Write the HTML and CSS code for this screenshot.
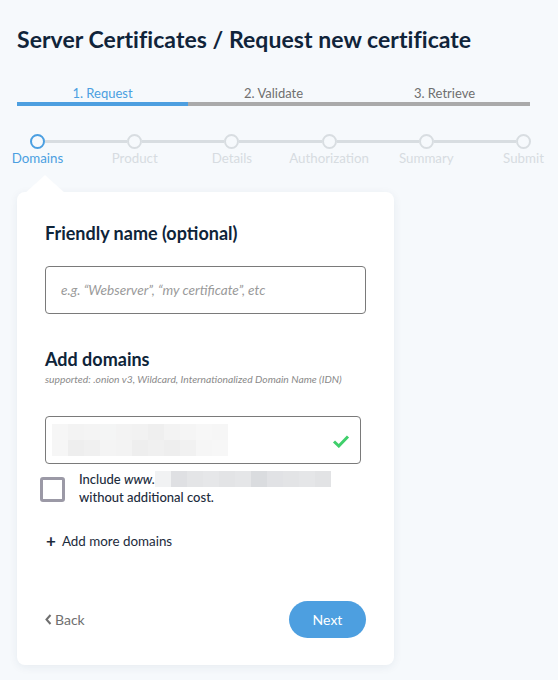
FILE: index.html
```html
<!DOCTYPE html>
<html>
<head>
<meta charset="utf-8">
<link rel="stylesheet" href="styles.css">
</head>
<body>
<div class="page">
  <h1 class="title">Server Certificates / Request new certificate</h1>

  <div class="tabs">
    <div class="tab active"><span>1. Request</span><div class="bar"></div></div>
    <div class="tab"><span>2. Validate</span><div class="bar"></div></div>
    <div class="tab"><span>3. Retrieve</span><div class="bar"></div></div>
  </div>

  <div class="stepper">
    <div class="step active"><div class="dot"></div><div class="label">Domains</div></div>
    <div class="conn"></div>
    <div class="step"><div class="dot"></div><div class="label">Product</div></div>
    <div class="conn"></div>
    <div class="step"><div class="dot"></div><div class="label">Details</div></div>
    <div class="conn"></div>
    <div class="step"><div class="dot"></div><div class="label">Authorization</div></div>
    <div class="conn"></div>
    <div class="step"><div class="dot"></div><div class="label">Summary</div></div>
    <div class="conn"></div>
    <div class="step"><div class="dot"></div><div class="label">Submit</div></div>
  </div>

  <div class="card">
    <h2 class="heading">Friendly name (optional)</h2>
    <div class="input friendly"><span class="placeholder">e.g. “Webserver”, “my certificate”, etc</span></div>

    <h2 class="heading h-domains">Add domains</h2>
    <div class="hint">supported: .onion v3, Wildcard, Internationalized Domain Name (IDN)</div>

    <div class="input domain">
      <div class="blur big">
        <i style="background:#f6f6f6"></i><i style="background:#f3f3f3"></i><i style="background:#f4f4f4"></i><i style="background:#f4f5f5"></i><i style="background:#f3f3f3"></i><i style="background:#f2f2f2"></i><i style="background:#efefef"></i><i style="background:#f3f3f3"></i><i style="background:#f5f5f5"></i><i style="background:#f7f7f7"></i><i style="background:#f6f6f6"></i>
        <i style="background:#f6f6f6"></i><i style="background:#eeeeee"></i><i style="background:#f0f0f0"></i><i style="background:#f4f4f4"></i><i style="background:#f3f3f3"></i><i style="background:#eeeeee"></i><i style="background:#f0f0f0"></i><i style="background:#eeeeee"></i><i style="background:#f1f1f1"></i><i style="background:#f6f6f6"></i><i style="background:#f7f7f7"></i>
      </div>
      <svg class="check" width="18" height="14" viewBox="0 0 18 14"><path d="M2 7.5 L6.8 12 L16 2.5" fill="none" stroke="#3fcf6b" stroke-width="3"/></svg>
    </div>

    <div class="check-row">
      <div class="box"></div>
      <div class="check-text">
        <div class="line1">Include <em>www.</em><span class="blur small"><i style="background:#f1f2f3"></i><i style="background:#dfe0e3"></i><i style="background:#e4e5e7"></i><i style="background:#e6e7e9"></i><i style="background:#e3e4e6"></i><i style="background:#e5e6e8"></i><i style="background:#dadcdf"></i><i style="background:#e1e2e5"></i><i style="background:#e3e4e6"></i><i style="background:#e5e6e8"></i><i style="background:#e2e3e5"></i></span></div>
        <div>without additional cost.</div>
      </div>
    </div>

    <div class="add-more"><span class="plus">+</span>Add more domains</div>

    <div class="footer">
      <div class="back"><svg width="7" height="11" viewBox="0 0 7 11"><path d="M5.5 1 L1.5 5.5 L5.5 10" fill="none" stroke="#6f6f6f" stroke-width="2"/></svg>Back</div>
      <div class="next">Next</div>
    </div>
  </div>
</div>
</body>
</html>
```

FILE: styles.css
```css
* { box-sizing: border-box; }
html, body { margin: 0; padding: 0; }
body {
  background: #f6f9fc;
  font-family: Lato, "Open Sans", sans-serif;
  color: #1c2b3c;
}
.page {
  width: 558px;
  height: 680px;
  overflow: hidden;
  padding: 25px 28px 0 17px;
}
.title {
  margin: 0;
  font-size: 23px;
  line-height: 28px;
  font-weight: 700;
  color: #10243a;
  letter-spacing: 0.05px;
}
.tabs {
  margin-top: 32px;
  display: flex;
  width: 513px;
}
.tab {
  flex: 1;
  display: flex;
  flex-direction: column;
  align-items: center;
  font-size: 13px;
  line-height: 16px;
  color: #6f6f6f;
}
.tab.active { color: #4b9fe1; }
.tab .bar {
  margin-top: 1px;
  align-self: stretch;
  height: 4px;
  background: #aaaaaa;
}
.tab.active .bar { background: #4d9fe0; }

.stepper {
  margin-top: 28px;
  display: flex;
  align-items: flex-start;
  width: 514px;
  padding-left: 13px;
}
.step {
  width: 15px;
  flex: none;
  display: flex;
  flex-direction: column;
  align-items: center;
}
.dot {
  width: 15px;
  height: 15px;
  border-radius: 50%;
  border: 2px solid #d8dde1;
  background: #f6f9fc;
}
.step.active .dot { border-color: #4b9fe1; }
.label {
  margin-top: 1px;
  font-size: 13.3px;
  line-height: 17px;
  white-space: nowrap;
  color: #d7dce1;
}
.step.active .label { color: #4b9fe1; }
.conn {
  flex: 1;
  height: 3px;
  margin-top: 6px;
  background: #d8dde1;
}

.card {
  position: relative;
  margin-top: 25px;
  width: 377px;
  height: 473px;
  background: #fff;
  border-radius: 8px;
  box-shadow: 0 2px 10px rgba(30, 50, 80, 0.07);
  padding: 29px 28px 0 28px;
}
.card::before {
  content: "";
  position: absolute;
  left: 8px;
  top: -17px;
  width: 0;
  height: 0;
  border-left: 20px solid transparent;
  border-right: 20px solid transparent;
  border-bottom: 18px solid #fff;
}
.heading {
  margin: 0;
  font-size: 18px;
  line-height: 24px;
  font-weight: 700;
  color: #0e2439;
}
.input {
  border: 1px solid #7a7a7a;
  border-radius: 4px;
  height: 48px;
  display: flex;
  align-items: center;
}
.friendly {
  margin-top: 21px;
  width: 321px;
  padding-left: 15px;
}
.placeholder {
  font-style: italic;
  font-size: 13.6px;
  color: #9a9a9a;
}
.h-domains { margin-top: 33px; }
.hint {
  font-size: 10.3px;
  line-height: 14px;
  font-style: italic;
  color: #8a8a8a;
  margin-top: 1px;
}
.domain {
  margin-top: 30px;
  width: 316px;
  padding-left: 6px;
  padding-right: 10px;
  justify-content: space-between;
}
.blur {
  display: grid;
}
.blur i { display: block; }
.blur.big {
  grid-template-columns: repeat(11, 16px);
  grid-auto-rows: 16px;
  width: 176px;
  height: 32px;
  overflow: hidden;
}
.blur.small {
  display: inline-grid;
  grid-template-columns: repeat(11, 16px);
  grid-auto-rows: 16px;
  width: 176px;
  height: 16px;
  vertical-align: -3px;
}
.check { margin-top: 2px; }

.check-row {
  margin-top: 6px;
  display: flex;
  align-items: flex-start;
  margin-left: -5px;
}
.box {
  width: 25px;
  height: 25px;
  border: 3px solid #9b99a6;
  border-radius: 3px;
  margin-top: 7px;
  flex: none;
}
.check-text {
  margin-left: 14px;
  font-size: 13px;
  line-height: 18px;
  color: #1c2b3c;
  font-weight: 500;
}
.check-text em { font-style: italic; }
.add-more {
  margin-top: 26px;
  font-size: 13.4px;
  line-height: 18px;
  color: #1c2b3c;
  display: flex;
  align-items: center;
  margin-left: 1px;
}
.plus {
  font-size: 17px;
  font-weight: 700;
  margin-right: 6px;
}
.footer {
  margin-top: 51px;
  display: flex;
  justify-content: space-between;
  align-items: center;
  width: 321px;
}
.back {
  display: flex;
  align-items: center;
  gap: 3px;
  font-size: 14px;
  color: #6f6f6f;
}
.next {
  width: 77px;
  height: 37px;
  border-radius: 19px;
  background: #4d9fe0;
  color: #fff;
  font-size: 14px;
  display: flex;
  align-items: center;
  justify-content: center;
}
```
